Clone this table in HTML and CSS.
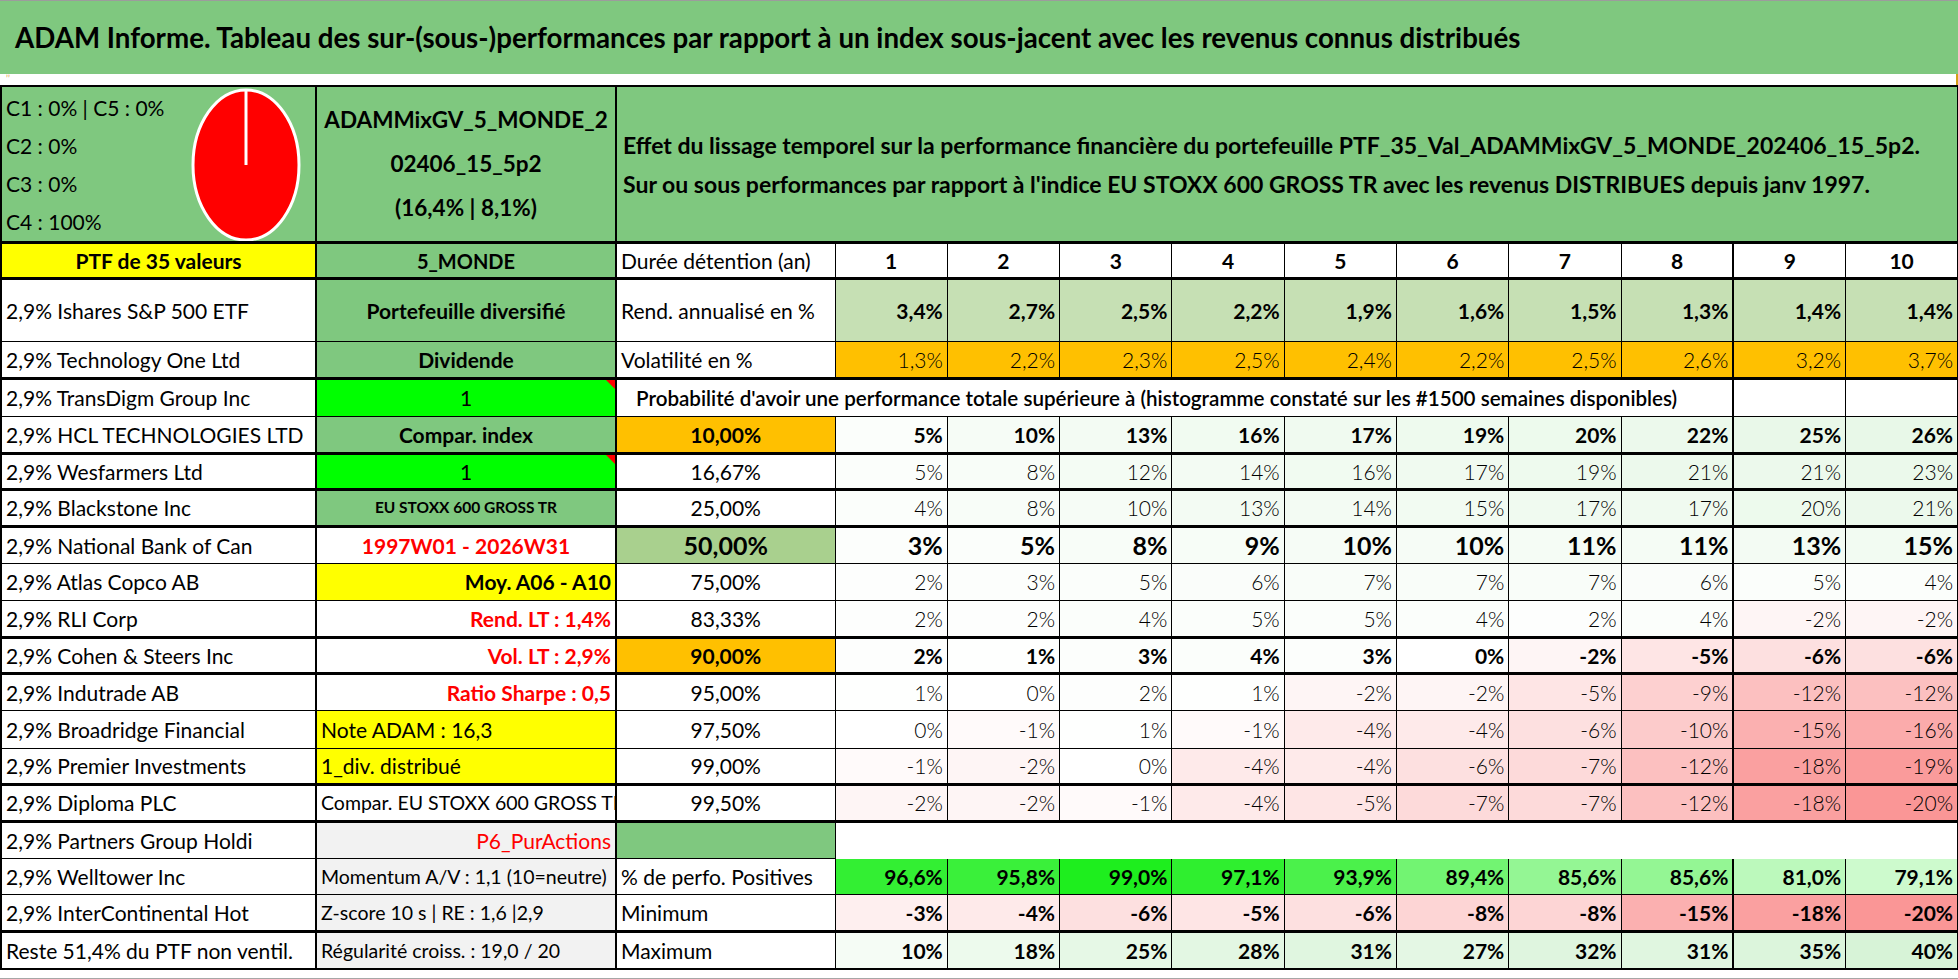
FILE: index.html
```html
<!DOCTYPE html>
<html lang="fr">
<head>
<meta charset="utf-8">
<title>ADAM Informe</title>
<link rel="stylesheet" href="styles.css">
</head>
<body>
<div class="sheet">
  <div class="topline"></div>
  <div class="title">ADAM Informe. Tableau des sur-(sous-)performances par rapport à un index sous-jacent avec les revenus connus distribués</div>
  <div class="gap"><span class="tick">ʼʼ</span><span class="goldmark"></span></div>
  <table class="grid">
    <colgroup>
      <col class="c-a"><col class="c-b"><col class="c-c">
      <col class="c-y"><col class="c-y"><col class="c-y"><col class="c-y"><col class="c-y">
      <col class="c-y"><col class="c-y"><col class="c-y"><col class="c-y"><col class="c-y">
    </colgroup>
    <tr class="h155">
      <td class="panel panel-a">
        <div class="panel-a-inner">
          <div class="cats">
            <div>C1 : 0% | C5 : 0%</div>
            <div>C2 : 0%</div>
            <div>C3 : 0%</div>
            <div>C4 : 100%</div>
          </div>
          <svg class="pie" width="112" height="154" viewBox="0 0 112 154">
            <ellipse cx="56" cy="77" rx="53" ry="75" fill="#ff0000" stroke="#ffffff" stroke-width="3"/>
            <line x1="56" y1="2" x2="56" y2="77" stroke="#ffffff" stroke-width="3"/>
          </svg>
        </div>
      </td>
      <td class="panel panel-b">ADAMMixGV_5_MONDE_2<br>02406_15_5p2<br>(16,4% | 8,1%)</td>
      <td class="panel panel-c" colspan="11">Effet du lissage temporel sur la performance financière du portefeuille PTF_35_Val_ADAMMixGV_5_MONDE_202406_15_5p2.<br>Sur ou sous performances par rapport à l'indice EU STOXX 600 GROSS TR avec les revenus DISTRIBUES depuis janv 1997.</td>
    </tr>
    <tr class="h36 thick">
      <td class="yellow ctr b">PTF de 35 valeurs</td>
      <td class="green ctr b mid">5_MONDE</td>
      <td>Durée détention (an)</td>
      <td class="ctr b">1</td><td class="ctr b">2</td><td class="ctr b">3</td><td class="ctr b">4</td><td class="ctr b">5</td>
      <td class="ctr b">6</td><td class="ctr b">7</td><td class="ctr b">8</td><td class="ctr b sep">9</td><td class="ctr b">10</td>
    </tr>
    <tr class="h63 thick">
      <td>2,9% Ishares S&amp;P 500 ETF</td>
      <td class="green ctr b">Portefeuille diversifié</td>
      <td>Rend. annualisé en %</td>
      <td class="n b rend">3,4%</td><td class="n b rend">2,7%</td><td class="n b rend">2,5%</td><td class="n b rend">2,2%</td><td class="n b rend">1,9%</td>
      <td class="n b rend">1,6%</td><td class="n b rend">1,5%</td><td class="n b rend">1,3%</td><td class="n b rend sep">1,4%</td><td class="n b rend">1,4%</td>
    </tr>
    <tr class="h37">
      <td>2,9% Technology One Ltd</td>
      <td class="green ctr b">Dividende</td>
      <td>Volatilité en %</td>
      <td class="n l orange">1,3%</td><td class="n l orange">2,2%</td><td class="n l orange">2,3%</td><td class="n l orange">2,5%</td><td class="n l orange">2,4%</td>
      <td class="n l orange">2,2%</td><td class="n l orange">2,5%</td><td class="n l orange">2,6%</td><td class="n l orange sep">3,2%</td><td class="n l orange">3,7%</td>
    </tr>
    <tr class="h38 thick">
      <td>2,9% TransDigm Group Inc</td>
      <td class="lime ctr note">1</td>
      <td class="proba" colspan="9">Probabilité d'avoir une performance totale supérieure à (histogramme constaté sur les #1500 semaines disponibles)</td>
      <td class="sep"></td><td></td>
    </tr>
    <tr class="h37">
      <td>2,9% HCL TECHNOLOGIES LTD</td>
      <td class="green ctr b">Compar. index</td>
      <td class="orange ctr b">10,00%</td>
      <td class="n b" style="background:#fbfefb">5%</td><td class="n b" style="background:#f6fcf6">10%</td><td class="n b" style="background:#f3fbf3">13%</td><td class="n b" style="background:#f1fbf1">16%</td><td class="n b" style="background:#f0faf0">17%</td>
      <td class="n b" style="background:#eefaee">19%</td><td class="n b" style="background:#edfaed">20%</td><td class="n b" style="background:#ecf9ec">22%</td><td class="n b sep" style="background:#e9f8e9">25%</td><td class="n b" style="background:#e8f8e8">26%</td>
    </tr>
    <tr class="h36 thick">
      <td>2,9% Wesfarmers Ltd</td>
      <td class="lime ctr note">1</td>
      <td class="ctr">16,67%</td>
      <td class="n l" style="background:#fbfefb">5%</td><td class="n l" style="background:#f8fdf8">8%</td><td class="n l" style="background:#f4fcf4">12%</td><td class="n l" style="background:#f3fbf3">14%</td><td class="n l" style="background:#f1fbf1">16%</td>
      <td class="n l" style="background:#f0faf0">17%</td><td class="n l" style="background:#eefaee">19%</td><td class="n l" style="background:#ecf9ec">21%</td><td class="n l sep" style="background:#ecf9ec">21%</td><td class="n l" style="background:#ebf9eb">23%</td>
    </tr>
    <tr class="h37 thick">
      <td>2,9% Blackstone Inc</td>
      <td class="green ctr b small">EU STOXX 600 GROSS TR</td>
      <td class="ctr">25,00%</td>
      <td class="n l" style="background:#fbfefb">4%</td><td class="n l" style="background:#f8fdf8">8%</td><td class="n l" style="background:#f6fcf6">10%</td><td class="n l" style="background:#f3fbf3">13%</td><td class="n l" style="background:#f3fbf3">14%</td>
      <td class="n l" style="background:#f2fbf2">15%</td><td class="n l" style="background:#f0faf0">17%</td><td class="n l" style="background:#f0faf0">17%</td><td class="n l sep" style="background:#edfaed">20%</td><td class="n l" style="background:#ecf9ec">21%</td>
    </tr>
    <tr class="h37 thick">
      <td>2,9% National Bank of Can</td>
      <td class="ctr b red">1997W01 - 2026W31</td>
      <td class="ctr b big median">50,00%</td>
      <td class="n b big" style="background:#fcfefc">3%</td><td class="n b big" style="background:#fbfefb">5%</td><td class="n b big" style="background:#f8fdf8">8%</td><td class="n b big" style="background:#f7fdf7">9%</td><td class="n b big" style="background:#f6fcf6">10%</td>
      <td class="n b big" style="background:#f6fcf6">10%</td><td class="n b big" style="background:#f5fcf5">11%</td><td class="n b big" style="background:#f5fcf5">11%</td><td class="n b big sep" style="background:#f3fbf3">13%</td><td class="n b big" style="background:#f2fbf2">15%</td>
    </tr>
    <tr class="h37">
      <td>2,9% Atlas Copco AB</td>
      <td class="yellow n b">Moy. A06 - A10</td>
      <td class="ctr">75,00%</td>
      <td class="n l" style="background:#fdfefd">2%</td><td class="n l" style="background:#fcfefc">3%</td><td class="n l" style="background:#fbfefb">5%</td><td class="n l" style="background:#fafdfa">6%</td><td class="n l" style="background:#f9fdf9">7%</td>
      <td class="n l" style="background:#f9fdf9">7%</td><td class="n l" style="background:#f9fdf9">7%</td><td class="n l" style="background:#fafdfa">6%</td><td class="n l sep" style="background:#fbfefb">5%</td><td class="n l" style="background:#fbfefb">4%</td>
    </tr>
    <tr class="h37">
      <td>2,9% RLI Corp</td>
      <td class="n b red">Rend. LT : 1,4%</td>
      <td class="ctr">83,33%</td>
      <td class="n l" style="background:#fdfefd">2%</td><td class="n l" style="background:#fdfefd">2%</td><td class="n l" style="background:#fbfefb">4%</td><td class="n l" style="background:#fbfefb">5%</td><td class="n l" style="background:#fbfefb">5%</td>
      <td class="n l" style="background:#fbfefb">4%</td><td class="n l" style="background:#fdfefd">2%</td><td class="n l" style="background:#fbfefb">4%</td><td class="n l sep" style="background:#fef5f5">-2%</td><td class="n l" style="background:#fef5f5">-2%</td>
    </tr>
    <tr class="h36 thick">
      <td>2,9% Cohen &amp; Steers Inc</td>
      <td class="n b red">Vol. LT : 2,9%</td>
      <td class="orange ctr b">90,00%</td>
      <td class="n b" style="background:#fdfefd">2%</td><td class="n b" style="background:#fefffe">1%</td><td class="n b" style="background:#fcfefc">3%</td><td class="n b" style="background:#fbfefb">4%</td><td class="n b" style="background:#fcfefc">3%</td>
      <td class="n b" style="background:#ffffff">0%</td><td class="n b" style="background:#fef5f5">-2%</td><td class="n b" style="background:#fee5e5">-5%</td><td class="n b sep" style="background:#fde0e0">-6%</td><td class="n b" style="background:#fde0e0">-6%</td>
    </tr>
    <tr class="h37 thick">
      <td>2,9% Indutrade AB</td>
      <td class="n b red">Ratio Sharpe : 0,5</td>
      <td class="ctr">95,00%</td>
      <td class="n l" style="background:#fefffe">1%</td><td class="n l" style="background:#ffffff">0%</td><td class="n l" style="background:#fdfefd">2%</td><td class="n l" style="background:#fefffe">1%</td><td class="n l" style="background:#fef5f5">-2%</td>
      <td class="n l" style="background:#fef5f5">-2%</td><td class="n l" style="background:#fee5e5">-5%</td><td class="n l" style="background:#fdd0d0">-9%</td><td class="n l sep" style="background:#fcc0c0">-12%</td><td class="n l" style="background:#fcc0c0">-12%</td>
    </tr>
    <tr class="h38">
      <td>2,9% Broadridge Financial</td>
      <td class="yellow">Note ADAM : 16,3</td>
      <td class="ctr">97,50%</td>
      <td class="n l" style="background:#ffffff">0%</td><td class="n l" style="background:#fffafa">-1%</td><td class="n l" style="background:#fefffe">1%</td><td class="n l" style="background:#fffafa">-1%</td><td class="n l" style="background:#feeaea">-4%</td>
      <td class="n l" style="background:#feeaea">-4%</td><td class="n l" style="background:#fde0e0">-6%</td><td class="n l" style="background:#fccbcb">-10%</td><td class="n l sep" style="background:#fbb0b0">-15%</td><td class="n l" style="background:#fbabab">-16%</td>
    </tr>
    <tr class="h36">
      <td>2,9% Premier Investments</td>
      <td class="yellow">1_div. distribué</td>
      <td class="ctr">99,00%</td>
      <td class="n l" style="background:#fffafa">-1%</td><td class="n l" style="background:#fef5f5">-2%</td><td class="n l" style="background:#ffffff">0%</td><td class="n l" style="background:#feeaea">-4%</td><td class="n l" style="background:#feeaea">-4%</td>
      <td class="n l" style="background:#fde0e0">-6%</td><td class="n l" style="background:#fddada">-7%</td><td class="n l" style="background:#fcc0c0">-12%</td><td class="n l sep" style="background:#faa0a0">-18%</td><td class="n l" style="background:#fa9b9b">-19%</td>
    </tr>
    <tr class="h37 thick">
      <td>2,9% Diploma PLC</td>
      <td class="clipped">Compar. EU STOXX 600 GROSS TR</td>
      <td class="ctr">99,50%</td>
      <td class="n l" style="background:#fef5f5">-2%</td><td class="n l" style="background:#fef5f5">-2%</td><td class="n l" style="background:#fffafa">-1%</td><td class="n l" style="background:#feeaea">-4%</td><td class="n l" style="background:#fee5e5">-5%</td>
      <td class="n l" style="background:#fddada">-7%</td><td class="n l" style="background:#fddada">-7%</td><td class="n l" style="background:#fcc0c0">-12%</td><td class="n l sep" style="background:#faa0a0">-18%</td><td class="n l" style="background:#fa9696">-20%</td>
    </tr>
    <tr class="h37 thick">
      <td>2,9% Partners Group Holdi</td>
      <td class="grey n red">P6_PurActions</td>
      <td class="green"></td>
      <td class="blank" colspan="10"></td>
    </tr>
    <tr class="h36">
      <td>2,9% Welltower Inc</td>
      <td class="grey smaller">Momentum A/V : 1,1 (10=neutre)</td>
      <td>% de perfo. Positives</td>
      <td class="n b nt" style="background:#33ef33">96,6%</td><td class="n b nt" style="background:#3af03a">95,8%</td><td class="n b nt" style="background:#1eee1e">99,0%</td><td class="n b nt" style="background:#2fef2f">97,1%</td><td class="n b nt" style="background:#4bf14b">93,9%</td>
      <td class="n b nt" style="background:#72f472">89,4%</td><td class="n b nt" style="background:#94f694">85,6%</td><td class="n b nt" style="background:#94f694">85,6%</td><td class="n b nt sep" style="background:#bcf9bc">81,0%</td><td class="n b nt" style="background:#cdfacd">79,1%</td>
    </tr>
    <tr class="h37">
      <td>2,9% InterContinental Hot</td>
      <td class="grey smaller">Z-score 10 s | RE : 1,6 |2,9</td>
      <td>Minimum</td>
      <td class="n b" style="background:#feefef">-3%</td><td class="n b" style="background:#feeaea">-4%</td><td class="n b" style="background:#fde0e0">-6%</td><td class="n b" style="background:#fee5e5">-5%</td><td class="n b" style="background:#fde0e0">-6%</td>
      <td class="n b" style="background:#fdd5d5">-8%</td><td class="n b" style="background:#fdd5d5">-8%</td><td class="n b" style="background:#fbb0b0">-15%</td><td class="n b sep" style="background:#faa0a0">-18%</td><td class="n b" style="background:#fa9696">-20%</td>
    </tr>
    <tr class="h37 thick">
      <td>Reste 51,4% du PTF non ventil.</td>
      <td class="grey smaller">Régularité croiss. : 19,0 / 20</td>
      <td>Maximum</td>
      <td class="n b" style="background:#f5fcf5">10%</td><td class="n b" style="background:#edfaed">18%</td><td class="n b" style="background:#e6f8e6">25%</td><td class="n b" style="background:#e3f7e3">28%</td><td class="n b" style="background:#e0f6e0">31%</td>
      <td class="n b" style="background:#e4f7e4">27%</td><td class="n b" style="background:#dff5df">32%</td><td class="n b" style="background:#e0f6e0">31%</td><td class="n b sep" style="background:#dcf5dc">35%</td><td class="n b" style="background:#d7f3d7">40%</td>
    </tr>
  </table>
  <div class="foot"></div>
</div>
</body>
</html>
```

FILE: styles.css
```css
* { box-sizing: border-box; }

html, body {
  margin: 0;
  padding: 0;
  background: #ffffff;
}

body {
  font-family: Lato, "Open Sans", "Liberation Sans", sans-serif;
  color: #000000;
  width: 1958px;
  height: 979px;
  overflow: hidden;
}

.sheet {
  width: 1958px;
}

.topline {
  height: 1px;
  background: #9c9c9c;
}

.title {
  height: 73px;
  background: #7fc87f;
  font-size: 27.7px;
  font-weight: 700;
  padding-left: 15px;
  display: flex;
  align-items: center;
  white-space: nowrap;
}

.gap {
  height: 11px;
  display: flex;
  justify-content: space-between;
  align-items: flex-start;
}

.tick {
  font-size: 9px;
  line-height: 9px;
  color: #e0a030;
  margin-left: 6px;
}

.goldmark {
  width: 2px;
  height: 11px;
  background: #d4a017;
}

.grid {
  border-collapse: collapse;
  table-layout: fixed;
  width: 1957px;
  border: 2px solid #000000;
}

.c-a { width: 315px; }
.c-b { width: 300px; }
.c-c { width: 219px; }
.c-y { width: 112.3px; }

.grid td {
  border: 1px solid #000000;
  padding: 0 4px;
  font-size: 21px;
  font-weight: 400;
  white-space: nowrap;
  overflow: hidden;
  vertical-align: middle;
  line-height: 1.1;
}

.h155 { height: 155px; }
.h63 { height: 63px; }
.h38 { height: 38px; }
.h37 { height: 37px; }
.h36 { height: 36px; }

.grid tr.thick > td { border-top: 3px solid #000000; }

.grid td:nth-child(2) { border-left: 2px solid #000000; }
.grid tr > td:nth-child(3) { border-left: 2px solid #000000; }
.grid td.sep { border-left: 2px solid #000000; }
.grid td:last-child { border-right: 2px solid #000000; }

/* panel */
.panel { background: #7fc87f; }

.grid td.panel-a {
  vertical-align: top;
  padding: 1px 4px 0 4px;
}

.panel-a-inner {
  display: flex;
  height: 153px;
}

.cats {
  width: 184px;
  font-size: 21px;
  line-height: 38px;
  padding-top: 1px;
}

.pie {
  display: block;
  align-self: center;
}

.grid td.panel-b {
  text-align: center;
  font-size: 22.5px;
  font-weight: 700;
  line-height: 44px;
  padding: 0 2px;
}

.grid td.panel-c {
  font-size: 23px;
  font-weight: 700;
  line-height: 39px;
  padding-left: 6px;
  padding-top: 2px;
}

/* fills */
.green { background: #7fc87f; }
.yellow { background: #ffff00; }
.lime { background: #00ff00; }
.orange { background: #ffc000; }
.rend { background: #c6e0b4; }
.median { background: #a9d08e; }
.grey { background: #f2f2f2; }

/* text */
.ctr { text-align: center; }
.n { text-align: right; }
.grid td.b { font-weight: 700; }
.grid td.l { font-weight: 300; }
.grid td.big { font-size: 25px; }
.grid td.mid { font-size: 20px; }
.grid td.small { font-size: 15.5px; }
.grid td.smaller { font-size: 19.5px; }
.grid td.clipped { font-size: 19.5px; }
.red { color: #ff0000; }

.grid td.proba {
  font-weight: 600;
  font-size: 20.6px;
  padding-left: 19px;
}

.grid td.blank {
  border-left: none;
  border-right: 2px solid #000000;
  border-bottom: none;
  background: #ffffff;
}

.grid td.nt { border-top: none; }

.note { position: relative; }
.note::after {
  content: "";
  position: absolute;
  top: 0;
  right: 0;
  border-style: solid;
  border-width: 0 9px 9px 0;
  border-color: transparent #ff0000 transparent transparent;
}

.foot {
  height: 10px;
  border-bottom: 2px solid #a6a6a6;
}
```
